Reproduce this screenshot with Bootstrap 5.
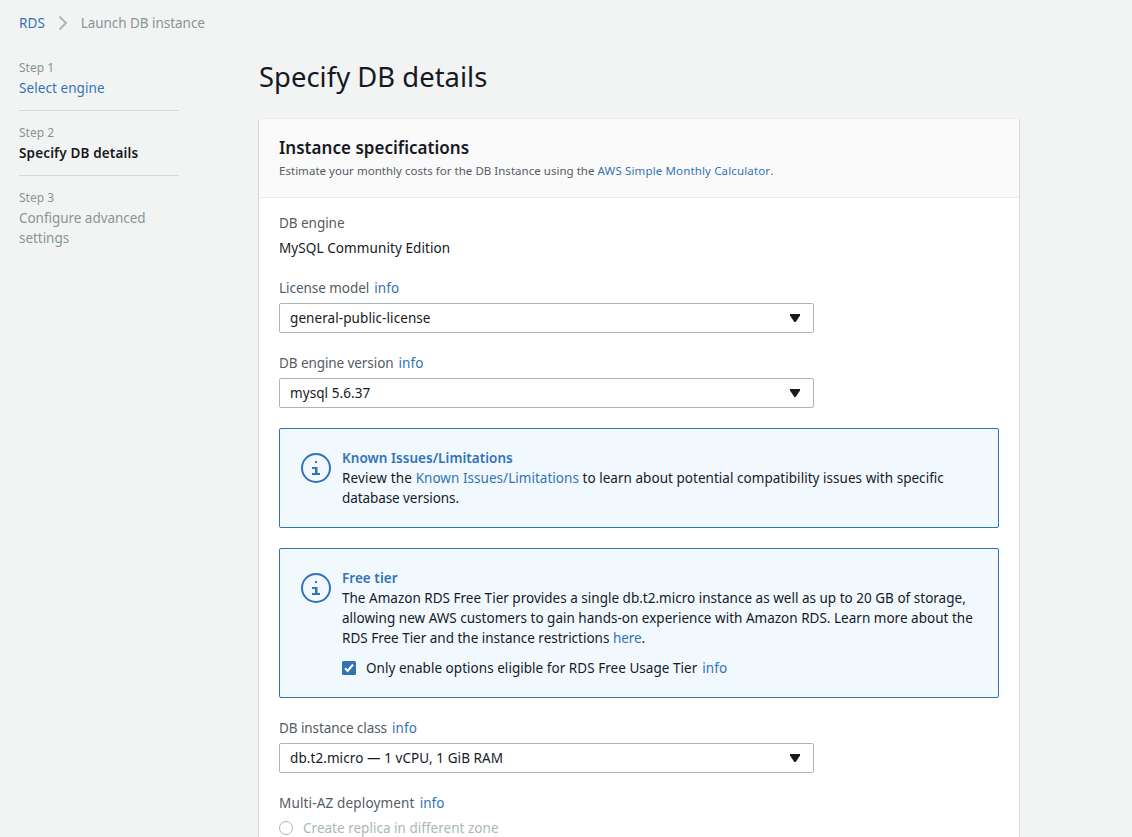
<!DOCTYPE html>
<html lang="en">
<head>
<meta charset="utf-8">
<meta name="viewport" content="width=device-width, initial-scale=1">
<title>Launch DB instance</title>
<link href="https://cdn.jsdelivr.net/npm/bootstrap@5.3.0/dist/css/bootstrap.min.css" rel="stylesheet">
<style>
  body { font-family: "Noto Sans", "Open Sans", sans-serif; font-size: 13.5px; line-height: 20px; letter-spacing: .02px; color: #16191f; background: #f2f4f4; height: 837px; overflow: hidden; }
  a { color: #3273b8; text-decoration: none; }
  a, .step, .lbl, .pick, .note, .option { white-space: nowrap; }
  strong { font-weight: 600; }
  .crumbs { padding: 13px 19px 0; height: 33px; color: #879596; letter-spacing: -.04px; }
  .crumbs svg { margin: 2px 13px 0 12.500px; }
  .page-body { padding: 25px 0 0 19px; }
  .steps { width: 160px; margin-right: 79px; color: #879596; }
  .step { padding-bottom: 12px; margin-bottom: 12px; border-bottom: 1px solid #d5dbdb; letter-spacing: -.04px; }
  .step:last-child { border: 0; }
  .step a { letter-spacing: .07px; }
  .step strong { letter-spacing: .15px; }
  .step-no { font-size: 12px; letter-spacing: 0; }
  .ink { color: #16191f; }
  .main-col { width: 762px; }
  h1 { font-size: 27.400px; line-height: 36px; font-weight: 400; margin: 1px 0 0 1px; letter-spacing: .03px; }
  .panel { margin-top: 23px; border: 1px solid #d5dbdb; border-top-color: #eaeded; border-radius: 2px; background: #fff; height: 760px; }
  .panel-head { background: #fafafa; border-bottom: 1px solid #eaeded; padding: 18px 20px 0; height: 79px; }
  h2 { font-size: 17px; line-height: 22px; font-weight: 600; margin: 0; letter-spacing: .03px; }
  .panel-note { font-size: 11.500px; line-height: 24px; color: #545b64; letter-spacing: .026px; }
  .panel-note a { letter-spacing: .14px; }
  .panel-main { padding: 15px 20px 0; }
  .engine-name { margin-bottom: 20px; letter-spacing: .09px; }
  .lbl { color: #545b64; margin-bottom: 5px; letter-spacing: -.04px; }
  .lbl a, .option a { margin-left: 5px; letter-spacing: .08px; }
  .snug { letter-spacing: -.08px; }
  .airy { letter-spacing: .16px; }
  .pick { width: 535px; height: 30px; border: 1px solid #aab7b8; border-radius: 2px; padding: 0 13px 0 10px; margin-bottom: 20px; background: #fff; letter-spacing: .08px; }
  .note { border: 1px solid #3273b8; border-radius: 2px; background: #f1f9ff; padding: 19px 21px; margin-bottom: 20px; letter-spacing: .035px; }
  .note-dense { letter-spacing: .012px; }
  .note > svg { flex: none; margin: 5px 11px 0 0; }
  .note strong { letter-spacing: .04px; color: #3273b8; }
  .option { gap: 10px; }
  .note .option { margin-top: 10px; letter-spacing: .035px; }
  .off { color: #aab7b8; }
  .ring { width: 14px; height: 14px; border: 1px solid #aab7b8; border-radius: 50%; background: #fff; }
</style>
</head>
<body>
<svg class="d-none">
  <symbol id="caret" viewBox="0 0 10 8"><path d="M0 0H10V1.500L5.700 8H4.300L0 1.500Z" fill="#16191f"/></symbol>
  <symbol id="info" viewBox="0 0 30 30"><circle cx="15" cy="15" r="14" fill="none" stroke="#3273b8" stroke-width="2"/><path d="M14 8h2v2h-2zM11 14h5.500v6H19v2h-8v-2h3v-4h-3z" fill="#3273b8"/></symbol>
</svg>
<nav class="crumbs d-flex">
  <a href="#" class="airy">RDS</a>
  <svg width="10" height="16" viewBox="0 0 10 16"><path d="M1.500 1.500L8 8l-6.500 6.500" fill="none" stroke="#aab7b8" stroke-width="2"/></svg>
  <span>Launch DB instance</span>
</nav>
<div class="page-body d-flex">
  <aside class="steps">
    <div class="step"><div class="step-no">Step 1</div><a href="#">Select engine</a></div>
    <div class="step"><div class="step-no">Step 2</div><strong class="ink">Specify DB details</strong></div>
    <div class="step"><div class="step-no">Step 3</div>Configure advanced<br>settings</div>
  </aside>
  <main class="main-col">
    <h1>Specify DB details</h1>
    <section class="panel">
      <header class="panel-head">
        <h2>Instance specifications</h2>
        <div class="panel-note">Estimate your monthly costs for the DB Instance using the <a href="#">AWS Simple Monthly Calculator</a>.</div>
      </header>
      <div class="panel-main">
        <div class="lbl">DB engine</div>
        <div class="engine-name">MySQL Community Edition</div>

        <div class="lbl">License model<a href="#">info</a></div>
        <div class="pick d-flex align-items-center justify-content-between"><span>general-public-license</span><svg width="10" height="8"><use href="#caret"/></svg></div>

        <div class="lbl"><span class="snug">DB engine version</span><a href="#">info</a></div>
        <div class="pick d-flex align-items-center justify-content-between"><span>mysql 5.6.37</span><svg width="10" height="8"><use href="#caret"/></svg></div>

        <div class="note d-flex">
          <svg width="30" height="30"><use href="#info"/></svg>
          <div>
            <strong>Known Issues/Limitations</strong><br>
            <span class="airy">Review the </span><a href="#">Known Issues/Limitations</a> to learn about potential compatibility issues with specific<br>
            <span class="snug">database versions.</span>
          </div>
        </div>

        <div class="note note-dense d-flex">
          <svg width="30" height="30"><use href="#info"/></svg>
          <div>
            <strong>Free tier</strong><br>
            The Amazon RDS Free Tier provides a single db.t2.micro instance as well as up to 20 GB of storage,<br>
            allowing new AWS customers to gain hands-on experience with Amazon RDS. Learn more about the<br>
            <span style="letter-spacing:-.01px">RDS Free Tier and the instance restrictions </span><a href="#" class="snug">here</a>.
            <div class="option d-flex align-items-center">
              <svg width="14" height="14" viewBox="0 0 14 14"><rect width="14" height="14" rx="1.500" fill="#3273b8"/><path d="M3 7.300l2.700 2.700L11 3.500" fill="none" stroke="#fff" stroke-width="2"/></svg>
              <span>Only enable options eligible for RDS Free Usage Tier<a href="#">info</a></span>
            </div>
          </div>
        </div>

        <div class="lbl"><span class="snug">DB instance class</span><a href="#">info</a></div>
        <div class="pick d-flex align-items-center justify-content-between"><span>db.t2.micro — 1 vCPU, 1 GiB RAM</span><svg width="10" height="8"><use href="#caret"/></svg></div>

        <div class="lbl"><span class="airy">Multi-AZ deployment</span><a href="#">info</a></div>
        <div class="option off d-flex align-items-center"><span class="ring"></span><span>Create replica in different zone</span></div>
      </div>
    </section>
  </main>
</div>
<script src="https://cdn.jsdelivr.net/npm/bootstrap@5.3.0/dist/js/bootstrap.bundle.min.js"></script>
</body>
</html>
